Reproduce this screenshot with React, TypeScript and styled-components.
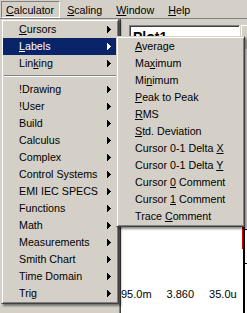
import React from 'react';
import styled, { createGlobalStyle } from 'styled-components';

const Global = createGlobalStyle`
  html, body { margin: 0; padding: 0; width: 247px; height: 313px; overflow: hidden; background: #d4d0c8; }
  body { font-family: "Liberation Sans", Arial, sans-serif; font-size: 10.7px; color: #000; }
  #root { width: 247px; height: 313px; }
`;

const Page = styled.div`
  position: relative;
  width: 247px;
  height: 313px;
  display: flex;
  flex-direction: column;
  overflow: hidden;
`;

const MenuBar = styled.div`
  display: flex;
  height: 18px;
  padding: 1px 0 0 1px;
  box-sizing: border-box;
  background: #d4d0c8;
`;

const BarItem = styled.div<{ $pressed?: boolean }>`
  height: 17px;
  line-height: 16px;
  box-sizing: border-box;
  border: 1px solid transparent;
  border-color: ${p => (p.$pressed ? '#808080 #ffffff #ffffff #808080' : 'transparent')};
  padding: 0 ${p => (p.$pressed ? '5px' : '6px')} 0 ${p => (p.$pressed ? '4px' : '6px')};
  white-space: nowrap;
`;

const Workspace = styled.div`
  flex: 1;
  display: flex;
  border-top: 1px solid #808080;
  min-height: 0;
`;

const LeftPane = styled.div`
  width: 119px;
  background: #d4d0c8;
`;

const RightPane = styled.div`
  flex: 1;
  display: flex;
  flex-direction: column;
  border-left: 1px solid #808080;
  box-shadow: inset 1px 0 0 #404040;
  padding-left: 1px;
  min-width: 0;
`;

const Toolbar = styled.div`
  height: 30px;
  display: flex;
  align-items: flex-start;
  gap: 1px;
  padding: 6px 0 0 8px;
  box-sizing: border-box;
  background: #d4d0c8;
`;

const TextBox = styled.div`
  width: 111px;
  height: 22px;
  box-sizing: border-box;
  background: #fff;
  border: 1px solid;
  border-color: #808080 #ffffff #ffffff #808080;
  box-shadow: inset 1px 1px 0 #404040;
  padding: 3px 0 0 3px;
  font-family: "Liberation Sans", Arial, sans-serif;
  font-size: 14px;
  line-height: 16px;
  font-weight: bold;
`;

const DropButton = styled.div`
  flex: 1;
  height: 22px;
  background: #d4d0c8;
  border-top: 1px solid #fff;
  border-left: 1px solid #fff;
`;

const PlotArea = styled.div`
  flex: 1;
  display: flex;
  background: #fff;
`;

const Readouts = styled.div`
  flex: 1;
  display: flex;
  align-items: flex-end;
  gap: 15px;
  padding: 0 0 12px 0;
  font-size: 11px;
  line-height: 13px;
  white-space: nowrap;
  overflow: hidden;
`;

const TraceEdge = styled.svg`
  flex: none;
  display: block;
`;

const MenuPanel = styled.div<{ $left: number; $top: number; $width: number }>`
  position: absolute;
  left: ${p => p.$left}px;
  top: ${p => p.$top}px;
  width: ${p => p.$width}px;
  box-sizing: border-box;
  background: #d4d0c8;
  border: 1px solid;
  border-color: #d4d0c8 #404040 #404040 #d4d0c8;
  box-shadow: inset 1px 1px 0 #ffffff, inset -1px -1px 0 #808080, 2px 2px 2px rgba(0, 0, 0, 0.45);
  padding: 1px;
  display: flex;
  flex-direction: column;
`;

const MenuRow = styled.div<{ $active?: boolean; $indent: number }>`
  height: 17px;
  display: flex;
  align-items: center;
  padding: 0 6px 0 ${p => p.$indent}px;
  background: ${p => (p.$active ? '#0a246a' : 'transparent')};
  color: ${p => (p.$active ? '#ffffff' : '#000000')};
  white-space: nowrap;
`;

const RowLabel = styled.span`
  flex: 1;
  line-height: 13px;
`;

const Separator = styled.div`
  height: 0;
  margin: 3px 1px 4px;
  border-top: 1px solid #808080;
  border-bottom: 1px solid #ffffff;
`;

const Arrow = ({ color }: { color: string }) => (
  <svg width="4" height="7" viewBox="0 0 4 7" shapeRendering="crispEdges" style={{ display: 'block' }}>
    <rect x="0" y="0" width="1" height="7" fill={color} />
    <rect x="1" y="1" width="1" height="5" fill={color} />
    <rect x="2" y="2" width="1" height="3" fill={color} />
    <rect x="3" y="3" width="1" height="1" fill={color} />
  </svg>
);

const Mnemonic = ({ text }: { text: string }) => {
  const i = text.indexOf('&');
  if (i < 0) return <>{text}</>;
  return (
    <>
      {text.slice(0, i)}
      <u>{text.charAt(i + 1)}</u>
      {text.slice(i + 2)}
    </>
  );
};

const topItems = ['&Cursors', '&Labels', 'Lin&king'];
const libItems = [
  '!Drawing', '!User', 'Build', 'Calculus', 'Complex', 'Control Systems', 'EMI IEC SPECS',
  'Functions', 'Math', 'Measurements', 'Smith Chart', 'Time Domain', 'Trig',
];
const labelItems = [
  '&Average', 'Ma&ximum', 'Mi&nimum', '&Peak to Peak', '&RMS', '&Std. Deviation',
  'Cursor 0-1 Delta &X', 'Cursor 0-1 Delta &Y', 'Cursor &0 Comment', 'Cursor &1 Comment', 'Trace &Comment',
];

export default function App() {
  return (
    <Page>
      <Global />
      <MenuBar>
        <BarItem $pressed><Mnemonic text="&Calculator" /></BarItem>
        <BarItem><Mnemonic text="&Scaling" /></BarItem>
        <BarItem><Mnemonic text="&Window" /></BarItem>
        <BarItem><Mnemonic text="&Help" /></BarItem>
      </MenuBar>
      <Workspace>
        <LeftPane />
        <RightPane>
          <Toolbar>
            <TextBox>Plot1</TextBox>
            <DropButton />
          </Toolbar>
          <PlotArea>
            <Readouts>
              <span>95.0m</span>
              <span>3.860</span>
              <span>35.0u</span>
            </Readouts>
            <TraceEdge width="5" height="264" viewBox="0 0 5 264">
              <rect x="0" y="0" width="1" height="200" fill="#e00000" />
              <rect x="1" y="0" width="2" height="264" fill="#000" />
              <rect x="3" y="180" width="2" height="1" fill="#000" />
              <rect x="3" y="214" width="2" height="1" fill="#000" />
            </TraceEdge>
          </PlotArea>
        </RightPane>
      </Workspace>

      <MenuPanel $left={1} $top={19} $width={118}>
        {topItems.map(t => (
          <MenuRow key={t} $indent={16} $active={t === '&Labels'}>
            <RowLabel><Mnemonic text={t} /></RowLabel>
            <Arrow color={t === '&Labels' ? '#fff' : '#000'} />
          </MenuRow>
        ))}
        <Separator />
        {libItems.map(t => (
          <MenuRow key={t} $indent={16}>
            <RowLabel>{t}</RowLabel>
            <Arrow color="#000" />
          </MenuRow>
        ))}
      </MenuPanel>

      <MenuPanel $left={116} $top={36} $width={129}>
        {labelItems.map(t => (
          <MenuRow key={t} $indent={17}>
            <RowLabel><Mnemonic text={t} /></RowLabel>
          </MenuRow>
        ))}
      </MenuPanel>
    </Page>
  );
}
